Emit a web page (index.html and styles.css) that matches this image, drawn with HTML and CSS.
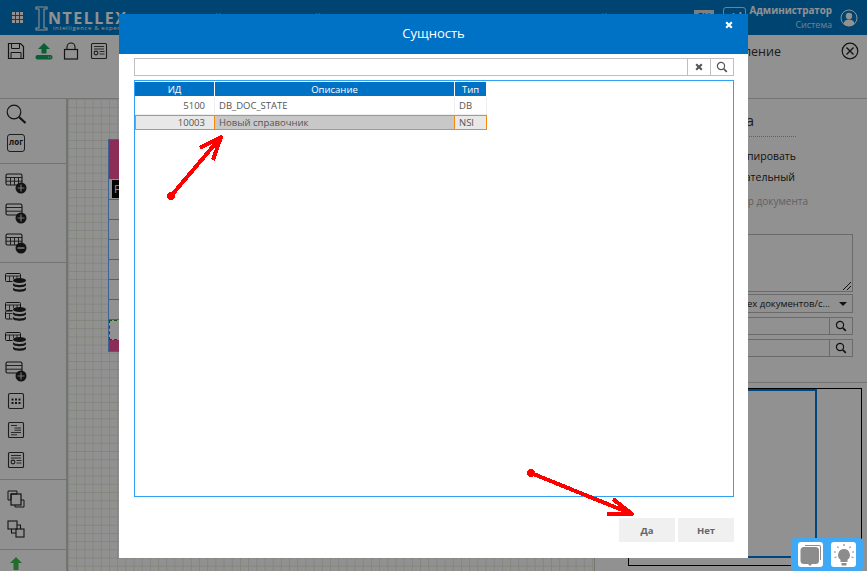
FILE: index.html
```html
<!DOCTYPE html>
<html lang="ru">
<head>
    <meta charset="UTF-8">
    <meta name="viewport" content="width=device-width, initial-scale=1.0">
    <title>Сущность</title>
    <link rel="stylesheet" href="styles.css">
</head>
<body>
    <svg class="defs" width="0" height="0">
        <defs>
            <symbol id="i-search" viewBox="0 0 22 22">
                <circle cx="9" cy="9" r="6.8" fill="none" stroke="#222" stroke-width="1.2"/>
                <path d="M14 14l6.5 6" stroke="#222" stroke-width="2.2" fill="none"/>
            </symbol>
            <symbol id="i-table" viewBox="0 0 22 22">
                <rect x="1" y="2" width="16" height="11" rx="1.5" fill="none" stroke="#222" stroke-width="1.1"/>
                <path d="M1 5.5h16M1 9.2h16M5.5 5.5v7.5M9.5 5.5v7.5M13.5 5.5v7.5" stroke="#222" stroke-width="0.9" fill="none"/>
            </symbol>
            <symbol id="i-tsmall" viewBox="0 0 22 22">
                <rect x="0.5" y="1.5" width="15" height="8" rx="1" fill="none" stroke="#222" stroke-width="1"/>
                <path d="M0.5 4h15M4.5 4v5.5M8.5 4v5.5M12 4v5.5" stroke="#222" stroke-width="0.8" fill="none"/>
            </symbol>
            <symbol id="i-tsmall-low" viewBox="0 0 22 22">
                <rect x="0.5" y="10" width="15" height="8" rx="1" fill="none" stroke="#222" stroke-width="1"/>
                <path d="M0.5 12.5h15M4.5 12.5v5.5M8.5 12.5v5.5M12 12.5v5.5" stroke="#222" stroke-width="0.8" fill="none"/>
            </symbol>
            <symbol id="i-row" viewBox="0 0 22 22">
                <rect x="1" y="2" width="16" height="11" rx="1.5" fill="none" stroke="#222" stroke-width="1.1"/>
                <path d="M1 5.5h16M1 9.2h16" stroke="#222" stroke-width="0.9" fill="none"/>
            </symbol>
            <symbol id="i-plus" viewBox="0 0 22 22">
                <circle cx="16" cy="16" r="5.5" fill="#222"/>
                <path d="M16 12.5v7M12.5 16h7" stroke="#ccc" stroke-width="1.2"/>
            </symbol>
            <symbol id="i-minus" viewBox="0 0 22 22">
                <circle cx="16" cy="16" r="5.5" fill="#222"/>
                <path d="M12.5 16h7" stroke="#ccc" stroke-width="1.6"/>
            </symbol>
            <symbol id="i-db" viewBox="0 0 22 22">
                <path d="M7.5 7v11.5c0 3.5 14 3.5 14 0V7z" fill="#fff"/>
                <ellipse cx="14.5" cy="8.5" rx="6.5" ry="2.5" fill="#222"/>
                <path d="M8 10.8c0 3 13 3 13 0v2.3c0 3-13 3-13 0zM8 15.3c0 3 13 3 13 0v2.3c0 3-13 3-13 0z" fill="#222"/>
            </symbol>
            <symbol id="i-grid" viewBox="0 0 22 22">
                <rect x="3.5" y="3.5" width="15" height="15" rx="1.5" fill="none" stroke="#333" stroke-width="1.1"/>
                <path d="M6.5 8.5h2v2h-2zM10 8.5h2v2h-2zM13.5 8.5h2v2h-2zM6.5 12h2v2h-2zM10 12h2v2h-2zM13.5 12h2v2h-2z" fill="#222"/>
            </symbol>
            <symbol id="i-list" viewBox="0 0 22 22">
                <rect x="3.5" y="3.5" width="15" height="15" rx="1" fill="none" stroke="#333" stroke-width="1.1"/>
                <path d="M6 6.5h6M9.5 9h6.5M9.5 11.2h6.5M6 13.5h10M6 15.8h6" stroke="#333" stroke-width="0.9"/>
            </symbol>
            <symbol id="i-form" viewBox="0 0 22 22">
                <rect x="3.5" y="3.5" width="15" height="15" rx="1" fill="none" stroke="#333" stroke-width="1.1"/>
                <path d="M6 6.5h10M6 9h10M11.5 11.5h5M11.5 14h5" stroke="#333" stroke-width="0.9"/>
                <circle cx="8" cy="13" r="1.9" fill="none" stroke="#333" stroke-width="1.1"/>
            </symbol>
            <symbol id="i-copy-front" viewBox="0 0 22 22">
                <path d="M3 3h9v3H6v6H3zM16 12h3v7h-9v-2" fill="none" stroke="#222" stroke-width="1"/>
                <rect x="6" y="6" width="10" height="11" fill="none" stroke="#222" stroke-width="1.2"/>
            </symbol>
            <symbol id="i-copy-back" viewBox="0 0 22 22">
                <rect x="3" y="3" width="9" height="8" fill="none" stroke="#222" stroke-width="1.1"/>
                <rect x="11" y="11" width="8" height="8" fill="none" stroke="#222" stroke-width="1.1"/>
                <path d="M6.5 11v4H11M12 7h3.5v4" fill="none" stroke="#222" stroke-width="1.1"/>
            </symbol>
            <symbol id="i-save" viewBox="0 0 18 18">
                <path d="M1.5 1.5h12l3 3v12h-15z" fill="none" stroke="#222" stroke-width="1.2"/>
                <path d="M4.5 1.5v5h8v-5M4 16.5v-6h10v6" fill="none" stroke="#222" stroke-width="1"/>
            </symbol>
            <symbol id="i-upload" viewBox="0 0 18 18">
                <path d="M9 1l6 6h-3.5v4.5h-5V7H3z" fill="#12a860"/>
                <rect x="0.5" y="13" width="17" height="4.5" rx="2" fill="#12a860"/>
                <path d="M13 15.2h1.2M15.2 15.2h1" stroke="#ddd" stroke-width="1"/>
            </symbol>
            <symbol id="i-lock" viewBox="0 0 18 18">
                <rect x="2.5" y="7.5" width="13" height="9.5" fill="none" stroke="#222" stroke-width="1.2"/>
                <path d="M5 7.5V5a4 4 0 0 1 8 0v2.5" fill="none" stroke="#222" stroke-width="1.1"/>
            </symbol>
            <symbol id="i-doc" viewBox="0 0 18 18">
                <rect x="1.5" y="1.5" width="15" height="15" rx="1" fill="none" stroke="#333" stroke-width="1.1"/>
                <path d="M4 4.5h10M4 7h10M9.5 9.5h5M9.5 12h5" stroke="#333" stroke-width="0.9"/>
                <circle cx="6" cy="11" r="1.9" fill="none" stroke="#333" stroke-width="1.1"/>
            </symbol>
            <symbol id="i-lens" viewBox="0 0 12 12">
                <circle cx="5" cy="5" r="3.6" fill="none" stroke="currentColor" stroke-width="1.2"/>
                <path d="M7.8 7.8l3 3" stroke="currentColor" stroke-width="1.7"/>
            </symbol>
        </defs>
    </svg>

    <div class="app">
        <header class="topbar">
            <div class="apps-icon">
                <i></i><i></i><i></i><i></i><i></i><i></i><i></i><i></i><i></i>
            </div>
            <div class="logo">
                <svg class="logo-mark" viewBox="0 0 13 25" width="13" height="25">
                    <path d="M1 1h11v2H9v19h3v2H1v-2h3V3H1z" fill="none" stroke="#fff" stroke-width="1.1"/>
                </svg>
                <div class="logo-text">
                    <div class="logo-name">NTELLEX</div>
                    <div class="logo-sub">intelligence &amp; experience</div>
                </div>
            </div>
            <div class="doc-title">
                <span>Свойства</span>
                <span>Новый справочник</span>
                <span>Модель (Ид: 10003)</span>
                <span>Новый (Ид: 10003)</span>
            </div>
            <div class="lang-btn">RU</div>
            <div class="tool-btn">
                <svg viewBox="0 0 22 14" width="22" height="14"><path d="M5 12l5-6 2 2-5 5zM15 11c2-1 3-4 2-7" fill="none" stroke="#fff" stroke-width="2"/></svg>
            </div>
            <div class="user">
                <div class="user-name">Администратор</div>
                <div class="user-role">Система</div>
            </div>
            <svg class="avatar" viewBox="0 0 18 18" width="18" height="18">
                <circle cx="9" cy="9" r="8" fill="none" stroke="#fff" stroke-width="1"/>
                <circle cx="9" cy="7" r="3.2" fill="#fff"/>
                <path d="M3.5 15c.5-3.5 3-4.5 5.5-4.5s5 1 5.5 4.5a8 8 0 0 1-11 0z" fill="#fff"/>
            </svg>
        </header>

        <div class="toolbar">
            <svg class="tool-ico"><use href="#i-save"/></svg>
            <svg class="tool-ico"><use href="#i-upload"/></svg>
            <svg class="tool-ico"><use href="#i-lock"/></svg>
            <svg class="tool-ico"><use href="#i-doc"/></svg>
            <div class="toolbar-title">Управление</div>
            <svg class="toolbar-close" viewBox="0 0 18 18" width="18" height="18">
                <circle cx="9" cy="9" r="7.8" fill="none" stroke="#222" stroke-width="1.2"/>
                <path d="M5.5 5.5l7 7M12.5 5.5l-7 7" stroke="#222" stroke-width="1.4"/>
            </svg>
        </div>

        <div class="workspace">
            <aside class="sidebar">
                <div class="side-group side-group-first">
                    <div class="side-item"><svg class="ico"><use href="#i-search"/></svg></div>
                    <div class="side-item"><div class="log-btn">лог</div></div>
                </div>
                <div class="side-group">
                    <div class="side-item"><svg class="ico"><use href="#i-table"/><use href="#i-plus"/></svg></div>
                    <div class="side-item"><svg class="ico"><use href="#i-row"/><use href="#i-plus"/></svg></div>
                    <div class="side-item"><svg class="ico"><use href="#i-table"/><use href="#i-minus"/></svg></div>
                </div>
                <div class="side-group side-group-tight">
                    <div class="side-item"><svg class="ico"><use href="#i-tsmall"/><use href="#i-db"/></svg></div>
                    <div class="side-item"><svg class="ico"><use href="#i-tsmall"/><use href="#i-tsmall-low"/><use href="#i-db"/></svg></div>
                    <div class="side-item"><svg class="ico"><use href="#i-tsmall"/><use href="#i-db"/></svg></div>
                    <div class="side-item"><svg class="ico"><use href="#i-row"/><use href="#i-plus"/></svg></div>
                    <div class="side-item"><svg class="ico"><use href="#i-grid"/></svg></div>
                    <div class="side-item"><svg class="ico"><use href="#i-list"/></svg></div>
                    <div class="side-item"><svg class="ico"><use href="#i-form"/></svg></div>
                </div>
                <div class="side-group side-group-copy">
                    <div class="side-item"><svg class="ico"><use href="#i-copy-front"/></svg></div>
                    <div class="side-item"><svg class="ico"><use href="#i-copy-back"/></svg></div>
                </div>
                <div class="side-group side-group-last">
                    <div class="side-item">
                        <svg class="ico">
                            <path d="M11 3l6 6h-3.5v7h-5V9H5z" fill="#3fc04a"/>
                            <path d="M5 19.5h12" stroke="#bcd" stroke-width="1"/>
                        </svg>
                    </div>
                </div>
            </aside>

            <main class="canvas">
                <div class="entity">
                    <div class="entity-head"></div>
                    <div class="entity-key"><span>F</span></div>
                    <div class="entity-row"></div>
                    <div class="entity-row"></div>
                    <div class="entity-row"></div>
                    <div class="entity-row"></div>
                    <div class="entity-row"></div>
                    <div class="entity-row"></div>
                    <div class="entity-row entity-row-new"></div>
                    <div class="entity-foot"></div>
                </div>
            </main>

            <section class="panel">
                <div class="panel-title">Настройка</div>
                <div class="panel-dots"></div>
                <div class="panel-line panel-line-copy">Копировать</div>
                <div class="panel-line panel-line-req">Обязательный</div>
                <div class="panel-line panel-line-num">Номер документа</div>
                <div class="panel-textarea">
                    <svg viewBox="0 0 10 10" width="10" height="10"><path d="M1 9l8-8M5 9l4-4" stroke="#222" stroke-width="1"/></svg>
                </div>
                <div class="panel-select">
                    <span>Список всех документов/с...</span>
                    <i class="caret"></i>
                </div>
                <div class="panel-input"><b><svg width="12" height="12"><use href="#i-lens"/></svg></b></div>
                <div class="panel-input"><b><svg width="12" height="12"><use href="#i-lens"/></svg></b></div>
                <div class="panel-sep"></div>
                <div class="preview">
                    <div class="preview-page"></div>
                </div>
            </section>
        </div>
    </div>

    <div class="overlay"></div>

    <div class="modal">
        <div class="modal-head">
            <span>Сущность</span>
            <svg class="modal-close" viewBox="0 0 10 10" width="8" height="8"><path d="M1.5 1.5l7 7M8.5 1.5l-7 7" stroke="#fff" stroke-width="2.6"/></svg>
        </div>
        <div class="modal-body">
            <div class="search">
                <div class="search-field"></div>
                <div class="search-btn">
                    <svg viewBox="0 0 10 10" width="8" height="8"><path d="M1.5 1.5l7 7M8.5 1.5l-7 7" stroke="#555" stroke-width="2.6"/></svg>
                </div>
                <div class="search-btn search-btn-find">
                    <svg width="12" height="12"><use href="#i-lens"/></svg>
                </div>
            </div>
            <div class="grid-box">
                <table class="grid">
                    <thead>
                        <tr><th class="col-id">ИД</th><th class="col-desc">Описание</th><th class="col-type">Тип</th></tr>
                    </thead>
                    <tbody>
                        <tr><td class="num">5100</td><td>DB_DOC_STATE</td><td>DB</td></tr>
                        <tr class="selected"><td class="num">10003</td><td>Новый справочник</td><td>NSI</td></tr>
                    </tbody>
                </table>
            </div>
            <div class="modal-actions">
                <button class="btn">Да</button>
                <button class="btn">Нет</button>
            </div>
        </div>
    </div>

    <svg class="marks" viewBox="0 0 867 571" width="867" height="571" shape-rendering="crispEdges">
        <g fill="none" stroke="#f00" stroke-width="4" stroke-linejoin="round">
            <path d="M171 196L221 137"/>
            <path d="M200 148L221 137L213 160"/>
            <path d="M531 473L632 514"/>
            <path d="M613 499L632 514L607 514"/>
        </g>
        <circle cx="171" cy="196" r="4" fill="#f00"/>
        <circle cx="531" cy="473" r="4" fill="#f00"/>
    </svg>

    <div class="helper">
        <div class="helper-btn">
            <svg viewBox="0 0 24 24" width="24" height="24">
                <path d="M6 2h14a2 2 0 0 1 2 2v13h-1V4a1 1 0 0 0-1-1H6z" fill="#8c8c8c"/>
                <rect x="1.5" y="4" width="18.5" height="17" rx="3.5" fill="#8c8c8c"/>
                <path d="M9 21h4l-2 2z" fill="#8c8c8c"/>
            </svg>
        </div>
        <div class="helper-btn">
            <svg viewBox="0 0 24 24" width="24" height="24">
                <path d="M12 6a6 6 0 0 0-3.5 10.8V19h7v-2.2A6 6 0 0 0 12 6z" fill="#8c8c8c"/>
                <path d="M9.5 20h5v2.5h-5z" fill="#8c8c8c"/>
                <path d="M12 1v2M5.5 3.5l1 1.5M18.500 3.5l-1 1.5M2 9h2M20 9h2M2.5 14.5l2-.5M21.5 14.5l-2-.5" stroke="#8c8c8c" stroke-width="1.2"/>
            </svg>
        </div>
    </div>
</body>
</html>
```

FILE: styles.css
```css
/* === Base === */
* {
    box-sizing: border-box;
}

html, body {
    margin: 0;
    padding: 0;
}

body {
    position: relative;
    width: 867px;
    height: 571px;
    overflow: hidden;
    font-family: "Open Sans", "Liberation Sans", sans-serif;
    color: #333;
    background: #fff;
}

.defs {
    position: absolute;
}

/* === App behind the dialog === */
.app {
    display: flex;
    flex-direction: column;
    height: 571px;
}

.topbar {
    display: flex;
    align-items: center;
    height: 35px;
    flex: none;
    background: #0079c8;
    color: #fff;
}

.apps-icon {
    display: grid;
    grid-template-columns: repeat(3, 3px);
    gap: 1px;
    margin-left: 12px;
    width: 11px;
}

.apps-icon i {
    height: 3px;
    background: #fff;
}

.logo {
    display: flex;
    align-items: flex-start;
    margin-left: 12px;
    width: 160px;
    height: 26px;
}

.logo-mark {
    flex: none;
    margin-top: 1px;
}

.logo-text {
    white-space: nowrap;
}

.logo-name {
    margin-top: 5px;
    font-size: 16px;
    line-height: 16px;
    font-weight: 700;
    letter-spacing: 1.5px;
}

.logo-sub {
    margin-left: 5px;
    font-size: 6px;
    line-height: 5px;
    letter-spacing: 0.6px;
}

.doc-title {
    display: flex;
    gap: 40px;
    width: 499px;
    font-size: 11px;
    white-space: nowrap;
    overflow: hidden;
}

.lang-btn {
    width: 20px;
    height: 16px;
    background: #ddd;
    color: #333;
    font-size: 9px;
    text-align: center;
}

.tool-btn {
    display: flex;
    justify-content: center;
    align-items: flex-start;
    width: 23px;
    height: 22px;
    margin-left: 9px;
    border: 1px solid #ddd;
    border-radius: 3px;
}

.user {
    width: 86px;
    text-align: right;
}

.user-name {
    font-size: 9.8px;
    line-height: 14px;
    font-weight: 700;
}

.user-role {
    font-size: 9px;
    line-height: 13px;
    color: #c3e3f5;
}

.avatar {
    margin-left: 8px;
}

.toolbar {
    display: flex;
    align-items: flex-start;
    height: 64px;
    flex: none;
    padding: 7px 8px 0 7px;
    background: #fff;
    border-bottom: 1px solid #ccc;
}

.tool-ico {
    width: 18px;
    height: 18px;
    margin-right: 9.5px;
}

.toolbar-title {
    margin-left: auto;
    margin-right: 60px;
    font-size: 12.5px;
    line-height: 20px;
}

.workspace {
    display: flex;
    flex: 1;
    min-height: 0;
}

/* === Left tool column === */
.sidebar {
    width: 68px;
    flex: none;
    border-right: 2px solid #ccc;
    background: #fff;
}

.side-group {
    padding-top: 4px;
    padding-bottom: 4px;
    border-bottom: 1px solid #ccc;
}

.side-group-first {
    padding-top: 0;
    padding-bottom: 6px;
}

.side-group-first .side-item {
    height: 29px;
}

.side-group-tight {
    padding-top: 5px;
}

.side-group-copy {
    padding-bottom: 5px;
}

.side-group-last {
    padding-top: 0;
    border-bottom: none;
}

.side-item {
    display: flex;
    align-items: center;
    height: 30px;
    padding-left: 5px;
}

.side-group-tight .side-item {
    height: 29.5px;
}

.ico {
    width: 22px;
    height: 22px;
}

.log-btn {
    width: 18px;
    height: 18px;
    margin-left: 2px;
    border: 1.5px solid #333;
    border-radius: 3px;
    font-size: 8px;
    font-weight: 700;
    line-height: 14px;
    text-align: center;
    color: #222;
}

/* === Diagram canvas === */
.canvas {
    position: relative;
    width: 527px;
    flex: none;
    background-color: #fff;
    background-image:
        linear-gradient(#e6ecd9 1px, transparent 1px),
        linear-gradient(90deg, #e6ecd9 1px, transparent 1px);
    background-size: 8.2px 8.2px;
    border-right: 1px solid #ccc;
}

.entity {
    position: absolute;
    left: 40px;
    top: 40px;
    width: 120px;
    border: 1px solid #6aaeff;
    background: #fff;
}

.entity-head {
    height: 39px;
    background: #f44f99;
}

.entity-key {
    height: 20px;
    margin-top: 1px;
    padding-left: 3px;
    border-bottom: 1px solid #6aaeff;
}

.entity-key span {
    display: block;
    width: 60px;
    height: 18px;
    background: #000;
    color: #fff;
    font-size: 11px;
    line-height: 18px;
    padding-left: 2px;
}

.entity-row {
    height: 20px;
    border-bottom: 1px solid #6aaeff;
}

.entity-row-new {
    border: 1px dashed #11a011;
}

.entity-foot {
    height: 11px;
    background: #f44f99;
}

/* === Right property panel === */
.panel {
    flex: 1;
    min-width: 0;
    padding: 0 14px 0 0;
    background: #fff;
    white-space: nowrap;
}

.panel-title {
    width: 159px;
    margin-top: 10px;
    font-size: 15px;
    line-height: 22px;
    text-align: right;
}

.panel-dots {
    width: 201px;
    height: 1px;
    margin-top: 5px;
    border-top: 1px dotted #aaa;
}

.panel-line {
    font-size: 10.5px;
    line-height: 14px;
    text-align: right;
    color: #222;
}

.panel-line-copy {
    width: 201px;
    margin-top: 12px;
}

.panel-line-req {
    width: 200px;
    margin-top: 7px;
}

.panel-line-num {
    width: 213px;
    margin-top: 10px;
    font-size: 10px;
    color: #aaa;
}

.panel-textarea {
    display: flex;
    align-items: flex-end;
    justify-content: flex-end;
    height: 58px;
    margin-top: 26px;
    border: 1px solid #bbb;
}

.panel-select {
    display: flex;
    align-items: center;
    justify-content: flex-end;
    height: 19px;
    margin-top: 2px;
    padding-right: 5px;
    border: 1px solid #bbb;
    font-size: 9.5px;
    color: #222;
}

.caret {
    margin-left: 9px;
    border-left: 4px solid transparent;
    border-right: 4px solid transparent;
    border-top: 4px solid #222;
}

.panel-input {
    display: flex;
    justify-content: flex-end;
    height: 18px;
    margin-top: 4px;
    border: 1px solid #bbb;
    color: #222;
}

.panel-input b {
    display: flex;
    align-items: center;
    justify-content: center;
    width: 23px;
    border-left: 1px solid #bbb;
}

.panel-sep {
    height: 1px;
    margin-top: 25px;
    margin-right: -14px;
    background: #ccc;
}

.preview {
    width: 234px;
    height: 178px;
    margin-top: 5px;
    margin-left: 33px;
    border: 1px solid #000;
}

.preview-page {
    width: 188px;
    height: 169px;
    border-right: 2px solid #0079e0;
    border-bottom: 2px solid #0079e0;
    border-top: 2px solid #0079e0;
}

/* === Dim layer === */
.overlay {
    position: absolute;
    inset: 0;
    background: rgba(0, 0, 0, 0.43);
}

/* === Dialog === */
.modal {
    position: absolute;
    left: 119px;
    top: 14px;
    width: 629px;
    height: 544px;
    display: flex;
    flex-direction: column;
    background: #fff;
}

.modal-head {
    position: relative;
    height: 40px;
    flex: none;
    background: #0072c6;
    color: #fff;
    font-size: 13px;
    line-height: 39px;
    text-align: center;
}

.modal-close {
    position: absolute;
    right: 15px;
    top: 7px;
}

.modal-body {
    display: flex;
    flex-direction: column;
    flex: 1;
    padding: 4px 14px 16px 15px;
}

.search {
    display: flex;
    height: 18px;
    flex: none;
    border: 1px solid #bfbfbf;
}

.search-field {
    flex: 1;
}

.search-btn {
    display: flex;
    align-items: center;
    justify-content: center;
    width: 23px;
    border-left: 1px solid #bfbfbf;
    color: #555;
}

.grid-box {
    height: 417px;
    flex: none;
    margin-top: 4px;
    padding: 1px 0 0;
    border: 1px solid #2ea1f2;
}

.grid {
    width: 352px;
    table-layout: fixed;
    border-collapse: separate;
    border-spacing: 0;
    font-size: 9.5px;
    color: #555;
}

.grid th {
    height: 15px;
    padding: 0;
    background: #0072c6;
    color: #fff;
    font-weight: 400;
    font-size: 9.5px;
    border-right: 1px solid #fff;
    border-bottom: 1px solid #fff;
}

.col-id {
    width: 80px;
}

.col-desc {
    width: 240px;
}

.col-type {
    width: 32px;
}

.grid td {
    height: 18px;
    padding: 0 4px;
    border-right: 1px solid #eee;
    border-bottom: 1px solid #eee;
}

.grid td.num {
    text-align: right;
    padding-right: 9px;
}

.grid .selected td {
    height: 15px;
    background: #e8e8e8;
    border-top: 1px solid #f08a10;
    border-bottom: 1px solid #f08a10;
    border-right: 1px solid #f08a10;
}

.grid .selected td:first-child {
    border-left: 1px solid #f08a10;
}

.grid .selected td:nth-child(2) {
    background: #c8c8c8;
}

.modal-actions {
    display: flex;
    justify-content: flex-end;
    gap: 3px;
    margin-top: 21px;
}

.btn {
    width: 56px;
    height: 24px;
    padding: 0;
    border: none;
    background: #f0f0f0;
    color: #666;
    font-family: inherit;
    font-size: 9.5px;
    font-weight: 700;
}

/* === Arrows drawn over the screenshot === */
.marks {
    position: absolute;
    left: 0;
    top: 0;
}

/* === Help widget === */
.helper {
    position: absolute;
    left: 791px;
    top: 538px;
    display: flex;
    gap: 8px;
    width: 72px;
    height: 33px;
    padding: 4px 7px;
    background: #3fa9f5;
    border-radius: 4px;
}

.helper-btn {
    display: flex;
    align-items: center;
    justify-content: center;
    width: 25px;
    height: 25px;
    background: #fff;
    border-radius: 3px;
}
```
